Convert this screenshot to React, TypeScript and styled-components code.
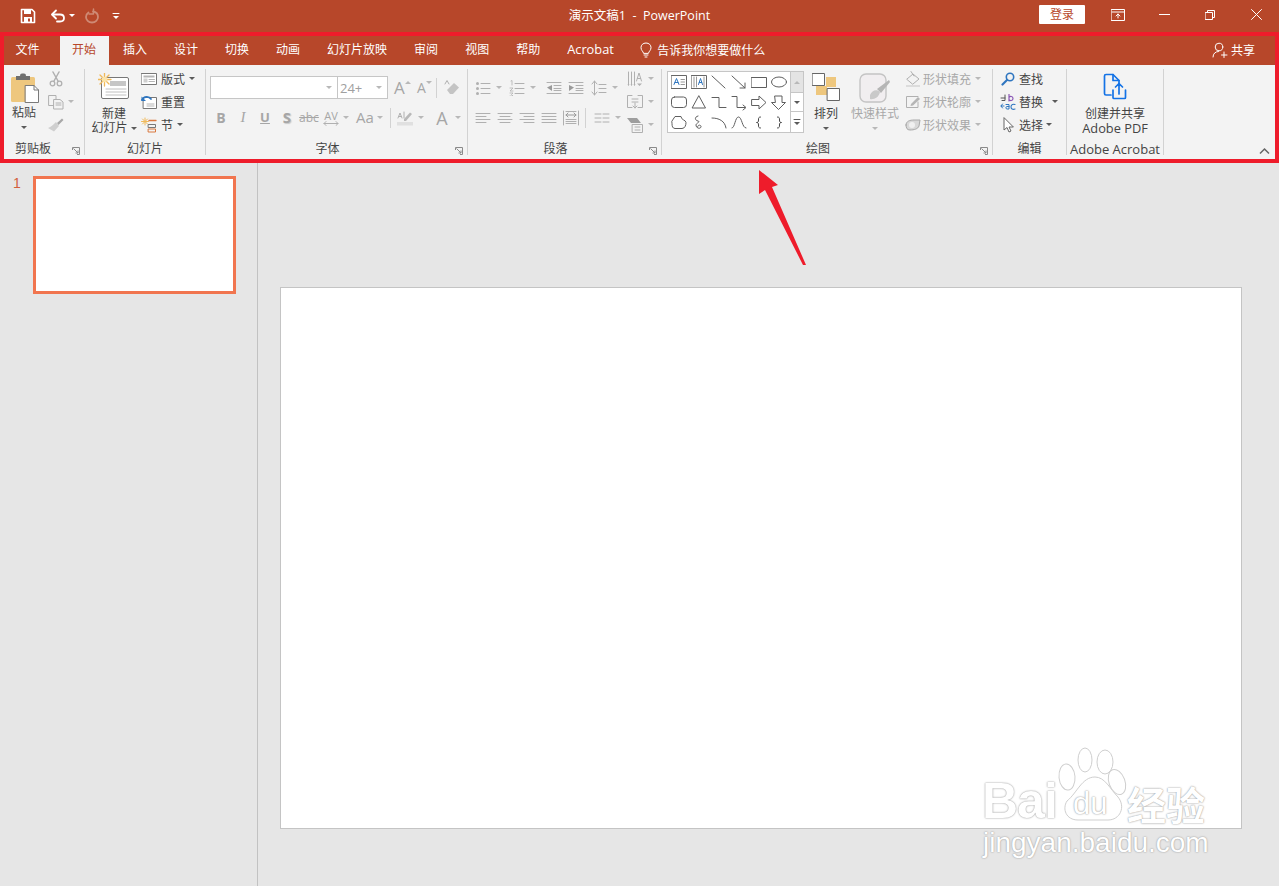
import React from "react";
import styled, { createGlobalStyle } from "styled-components";

const BRAND = "#b7472a";
const OFF = "#b0b0b0";
const INK = "#5f5f5f";
const CJK = `"Open Sans", "Noto Sans CJK SC", sans-serif`;

const Global = createGlobalStyle`
    html, body { margin: 0; padding: 0; background: #e6e6e6; }
    body { font-family: ${CJK}; font-size: 12px; color: #444; overflow: hidden; }
    * { box-sizing: border-box; }
`
const Page = styled.div`
    position: relative;
    width: 1279px;
    height: 886px;
    overflow: hidden;
    display: flex;
    flex-direction: column;
`
/* ---------- title bar ---------- */
const TitleBar = styled.div`
    height: 33px;
    background: ${BRAND};
    color: #fff;
    display: grid;
    grid-template-columns: 1fr auto 1fr;
    align-items: center;
`
const Quick = styled.div`
    display: flex;
    align-items: center;
    padding: 0 0 2px 20px;
`
const QuickBtn = styled.div<{ $w: number }>`
    width: ${p => p.$w}px;
    display: flex;
    align-items: center;
`
const DocTitle = styled.div`
    font-size: 12.5px;
    white-space: pre;
    padding-bottom: 4px;
`
const WinButtons = styled.div`
    display: flex;
    align-items: center;
    justify-content: flex-end;
    padding-bottom: 4px;
`
const Login = styled.div`
    width: 46px;
    height: 19px;
    background: #fff;
    color: ${BRAND};
    border-radius: 1px;
    text-align: center;
    line-height: 19px;
    font-size: 12px;
    margin-right: 10px;
`
const WinBtn = styled.div`
    width: 46px;
    display: flex;
    justify-content: center;
`
/* ---------- tabs ---------- */
const TabRow = styled.div`
    height: 32px;
    background: ${BRAND};
    display: flex;
    align-items: flex-end;
    padding: 0 24px 0 2px;
    color: #fff;
`
const Tab = styled.div<{ $active?: boolean; $file?: boolean; $latin?: boolean }>`
    height: 29px;
    line-height: 27px;
    padding: 0 12.5px;
    margin: 0 ${p => (p.$file ? 6.5 : 1)}px 0 1px;
    background: ${p => (p.$active ? "#f3f3f3" : "transparent")};
    color: ${p => (p.$active ? BRAND : "#fff")};
    font-size: ${p => (p.$latin ? 12.8 : 12)}px;
    white-space: nowrap;
`
const TellMe = styled.div`
    display: flex;
    align-items: center;
    gap: 4px;
    height: 27px;
    margin: 0 0 2px 12px;
`
const Share = styled.div`
    margin: 0 0 2px auto;
    height: 27px;
    display: flex;
    align-items: center;
    gap: 3px;
`
/* ---------- ribbon ---------- */
const Ribbon = styled.div`
    position: relative;
    height: 94px;
    background: #f3f3f3;
    display: flex;
    padding: 4px 0;
`
const GroupBox = styled.div<{ $w: number }>`
    position: relative;
    width: ${p => p.$w}px;
    flex: none;
    display: flex;
    flex-direction: column;
    border-right: 1px solid #d2d2d2;
`
const GroupBody = styled.div`
    flex: 1;
    display: flex;
    min-height: 0;
`
const GroupLabel = styled.div<{ $launcher?: boolean; $latin?: boolean }>`
    height: 14px;
    line-height: 14px;
    margin-top: 1px;
    margin-bottom: -1px;
    padding-right: ${p => (p.$launcher ? 18 : 0)}px;
    text-align: center;
    white-space: nowrap;
    color: #444;
    font-size: ${p => (p.$latin ? 13 : 12)}px;
`
const Launcher = styled.svg`
    position: absolute;
    right: 4px;
    bottom: 0;
    width: 8px;
    height: 8px;
`
const Collapse = styled.svg`
    position: absolute;
    left: 1259px;
    top: 82px;
    width: 11px;
    height: 8px;
`
const Large = styled.div<{ $w: number; $off?: boolean }>`
    width: ${p => p.$w}px;
    flex: none;
    display: flex;
    flex-direction: column;
    align-items: center;
    color: ${p => (p.$off ? "#a8a8a8" : "#444")};
    padding-top: 4px;
`
const LargeIcon = styled.div<{ $h?: number }>`
    height: ${p => p.$h ?? 34}px;
`
const LargeText = styled.div<{ $latin?: boolean }>`
    line-height: 14px;
    white-space: nowrap;
    display: flex;
    align-items: center;
    font-size: ${p => (p.$latin ? 12.8 : 12)}px;
`
const Stack = styled.div<{ $pl?: number }>`
    display: flex;
    flex-direction: column;
    gap: 2px;
    padding-left: ${p => p.$pl ?? 0}px;
    margin-top: -1px;
`
const SmallBtn = styled.div<{ $off?: boolean }>`
    height: 21px;
    display: flex;
    align-items: center;
    gap: 4px;
    white-space: nowrap;
    color: ${p => (p.$off ? "#a8a8a8" : "#444")};
`
const Slot = styled.div<{ $w?: number }>`
    width: ${p => p.$w ?? 16}px;
    flex: none;
    display: flex;
    align-items: center;
    justify-content: center;
`
const Caret = styled.i<{ $ml?: number; $off?: boolean }>`
    display: inline-block;
    width: 0;
    height: 0;
    margin-left: ${p => p.$ml ?? 0}px;
    border: 3px solid transparent;
    border-bottom: 0;
    border-top-color: ${p => (p.$off ? "#b8b8b8" : "#5a5a5a")};
`
const CaretRow = styled.div`
    height: 12px;
    display: flex;
    align-items: center;
    margin-top: 1px;
`
const Rows = styled.div<{ $pl: number; $w: number }>`
    width: ${p => p.$w}px;
    flex: none;
    padding: 7px 0 0 ${p => p.$pl}px;
    display: flex;
    flex-direction: column;
    gap: 8px;
`
const Row = styled.div`
    display: flex;
    align-items: center;
    height: 23px;
`
const Combo = styled.div<{ $w: number; $join?: boolean }>`
    width: ${p => p.$w}px;
    height: 23px;
    background: #fff;
    border: 1px solid #c6c6c6;
    margin-left: ${p => (p.$join ? -1 : 0)}px;
    display: flex;
    align-items: center;
    padding: 0 5px 0 2px;
    color: #a0a0a0;
    font-size: 13px;
    justify-content: space-between;
`
const IconBtn = styled.div<{ $w?: number }>`
    width: ${p => p.$w ?? 22}px;
    flex: none;
    height: 22px;
    display: flex;
    align-items: center;
`
const Glyph = styled.span<{ $size?: number; $bold?: boolean; $italic?: boolean; $under?: boolean; $strike?: boolean; $shadow?: boolean }>`
    font-family: "Open Sans", sans-serif;
    font-size: ${p => p.$size ?? 12}px;
    font-weight: ${p => (p.$bold ? 700 : 400)};
    font-style: ${p => (p.$italic ? "italic" : "normal")};
    text-decoration: ${p => (p.$under ? "underline" : p.$strike ? "line-through" : "none")};
    text-shadow: ${p => (p.$shadow ? "1px 1px 1px #c8c8c8" : "none")};
    color: #a6a6a6;
    line-height: 1;
`
const AVStack = styled.span`
    display: flex;
    flex-direction: column;
    align-items: center;
    line-height: 10px;
`
const VSep = styled.div`
    width: 1px;
    height: 20px;
    background: #d2d2d2;
    flex: none;
`
/* ---------- shape gallery ---------- */
const Gallery = styled.div`
    margin: 2px 0 0 5px;
    width: 137px;
    height: 62px;
    flex: none;
    display: flex;
    border: 1px solid #c6c6c6;
    background: #fff;
`
const GalleryGrid = styled.div`
    width: 122px;
    display: grid;
    grid-template-columns: repeat(6, 20px);
    grid-auto-rows: 20px;
    padding: 1px 0 0 1px;
`
const Cell = styled.div`
    display: flex;
    align-items: center;
    justify-content: center;
`
const Spin = styled.div`
    flex: 1;
    display: flex;
    flex-direction: column;
    border-left: 1px solid #c6c6c6;
`
const SpinPart = styled.div<{ $top?: boolean; $h: number }>`
    height: ${p => p.$h}px;
    background: ${p => (p.$top ? "#e4e4e4" : "#fff")};
    border-bottom: 1px solid #c6c6c6;
    display: flex;
    align-items: center;
    justify-content: center;
    &:last-child { border-bottom: 0; }
`
/* ---------- main area ---------- */
const Main = styled.div`
    flex: 1;
    display: flex;
    background: #e6e6e6;
    min-height: 0;
`
const Sidebar = styled.div`
    width: 258px;
    flex: none;
    border-right: 1px solid #c2c2c2;
    padding: 17px 0 0 13px;
    display: flex;
    align-items: flex-start;
    gap: 14px;
`
const ThumbNo = styled.div`
    color: #d2603c;
    font-family: "Liberation Sans", sans-serif;
    font-size: 14px;
    line-height: 15px;
    width: 6px;
`
const Thumb = styled.div`
    width: 203px;
    height: 118px;
    background: #fff;
    border: 3px solid #f1754f;
`
const Canvas = styled.div`
    flex: 1;
    padding: 128px 0 0 22px;
`
const Slide = styled.div`
    width: 962px;
    height: 542px;
    background: #fff;
    border: 1px solid #c4c4c4;
`
/* ---------- things lying over the screenshot ---------- */
const RedBox = styled.div`
    position: absolute;
    left: 0;
    top: 32px;
    width: 1279px;
    height: 131px;
    border: 4px solid #ee1c2b;
    pointer-events: none;
`
const Arrow = styled.svg`
    position: absolute;
    left: 750px;
    top: 165px;
    width: 65px;
    height: 105px;
`
const Mark = styled.div`
    position: absolute;
    left: 975px;
    top: 745px;
    width: 245px;
    height: 120px;
    color: #fff;
    text-shadow: 0 0 2px #9c9c9c, 0 0 1px #b8b8b8;
    font-family: "Liberation Sans", sans-serif;
    line-height: 1;
`
const MarkBai = styled.span`
    position: absolute;
    left: 7px;
    top: 31px;
    font-size: 50px;
    font-weight: 700;
    letter-spacing: -1px;
`
const MarkPaw = styled.svg`
    position: absolute;
    left: 75px;
    top: 0;
    width: 90px;
    height: 80px;
`
const MarkDu = styled.span`
    position: absolute;
    left: 98px;
    top: 43px;
    font-size: 31px;
`
const MarkCn = styled.span`
    position: absolute;
    left: 152px;
    top: 39px;
    font-size: 39px;
    font-family: "Noto Sans CJK SC", sans-serif;
    font-weight: 700;
`
const MarkUrl = styled.span`
    position: absolute;
    left: 8px;
    top: 84px;
    font-size: 28px;
    white-space: nowrap;
`

const Ico = ({ w = 16, h = 16, children }: { w?: number; h?: number; children: React.ReactNode }) => (
    <svg width={w} height={h} viewBox={`0 0 ${w} ${h}`} fill="none" strokeLinecap="round" strokeLinejoin="round" style={{ display: "block" }}>
        {children}
    </svg>
);

const Lines = ({ ys, x1, x2 }: { ys: number[]; x1: number; x2: number }) => (
    <>{ys.map(y => <path key={y} d={`M${x1} ${y}.5H${x2}`} stroke={OFF} />)}</>
);

function Group({ w, label, launcher, latin, children }: { w: number; label: string; launcher?: boolean; latin?: boolean; children: React.ReactNode }) {
    return (
        <GroupBox $w={w}>
            <GroupBody>{children}</GroupBody>
            <GroupLabel $launcher={launcher} $latin={latin}>{label}</GroupLabel>
            {launcher && (
                <Launcher viewBox="0 0 8 8" fill="none" stroke="#8a8a8a">
                    <path d="M.5 3V.5H7.5V7.5H5" />
                    <path d="M1.5 1.5L6 6M6 3.5V6H3.5" />
                </Launcher>
            )}
        </GroupBox>
    );
}

const shapes: React.ReactNode[] = [
    <><rect x=".5" y=".5" width="15" height="13" stroke="#666" /><path d="M3 9.5L5.5 3.5L8 9.5M4 7.5H7" stroke="#2f76c0" /><path d="M10 4.5H13.5M10 7H13.5M10 9.5H13.5" stroke="#999" /></>,
    <><rect x=".5" y=".5" width="15" height="13" stroke="#666" /><path d="M3 2V12M5.5 2V12M13 2V12" stroke="#999" /><path d="M7.5 9.5L9.5 3.5L11.5 9.5M8.3 7.5H10.7" stroke="#2f76c0" /></>,
    <path d="M1 1L14 13" stroke={INK} />,
    <><path d="M1 1L14 13" stroke={INK} /><path d="M14 8V13H9" stroke={INK} /></>,
    <rect x=".5" y="2.5" width="15" height="10" stroke={INK} />,
    <ellipse cx="8" cy="7" rx="7.5" ry="5" stroke={INK} />,
    <rect x=".5" y="2" width="15" height="10.5" rx="3" stroke={INK} />,
    <path d="M8 1L14.5 13H1.5Z" stroke={INK} />,
    <path d="M1 2.5H8V12.5H15" stroke={INK} />,
    <><path d="M1 1.5H6V12.5H14" stroke={INK} /><path d="M12 10L15 12.5L12 15" stroke={INK} /></>,
    <path d="M1 4.5H8V1L15 7.5L8 14V10.5H1Z" stroke={INK} />,
    <path d="M4 1H11V7.5H14.5L7.5 14.5L.5 7.5H4Z" stroke={INK} />,
    <path d="M1 6L4 1.5H10C10 5 15 5 15 7.5C15 10 14 13.5 11 13.5H4C1.5 13.5 1 11 1 9Z" stroke={INK} />,
    <path d="M7 1C3 2 4 5.5 7 6C10 7 5 8 5 10C5 13 9 14.5 10 12C10.5 10 7 9 6.5 12" stroke={INK} />,
    <path d="M1 3C8 3 14 6 15 13" stroke={INK} />,
    <path d="M1 13C4 13 4 2 7.5 2C11 2 11 13 15 13" stroke={INK} />,
    <path d="M9.5 2C7.5 2 7.5 3 7.5 5C7.5 7 7 7.5 5.5 7.5C7 7.5 7.5 8 7.5 10C7.5 12 7.5 13 9.5 13" stroke="#444" />,
    <path d="M6.5 2C8.5 2 8.5 3 8.5 5C8.5 7 9 7.5 10.5 7.5C9 7.5 8.5 8 8.5 10C8.5 12 8.5 13 6.5 13" stroke="#444" />,
];

const Blue = "#1473e6";

export default function App() {
    return (
        <Page>
            <Global />
            <TitleBar>
                <Quick>
                    <QuickBtn $w={30}>
                        <Ico>
                            <path d="M1.5 1.5H12L14.5 4V14.5H1.5Z" stroke="#fff" strokeWidth="1.6" />
                            <rect x="4" y="2" width="7" height="4" fill="#fff" />
                            <rect x="4" y="9" width="8" height="5" fill="#fff" />
                            <rect x="8" y="10.5" width="2" height="3" fill={BRAND} />
                        </Ico>
                    </QuickBtn>
                    <QuickBtn $w={34}>
                        <Ico>
                            <path d="M2.5 6.5H10C13 6.5 14 8.5 14 10C14 12 12.5 13.5 10 13.5H7" stroke="#fff" strokeWidth="1.8" />
                            <path d="M6 2.5L2 6.5L6 10.5" stroke="#fff" strokeWidth="1.8" />
                        </Ico>
                        <Caret $ml={3} style={{ borderTopColor: "#fff" }} />
                    </QuickBtn>
                    <QuickBtn $w={28}>
                        <Ico>
                            <path d="M9 3.5C12 4 14 6 14 9C14 12 11.5 14.5 8 14.5C4.5 14.5 2 12 2 9C2 7 3 5.5 4.5 4.5" stroke="#cf8a75" strokeWidth="1.8" />
                            <path d="M9.5 1V6H5" stroke="#cf8a75" strokeWidth="1.5" />
                        </Ico>
                    </QuickBtn>
                    <QuickBtn $w={20}>
                        <Ico w={8} h={10}>
                            <path d="M1 2.5H7" stroke="#fff" />
                            <path d="M1 5H7L4 8Z" fill="#fff" />
                        </Ico>
                    </QuickBtn>
                </Quick>
                <DocTitle>演示文稿1  -  PowerPoint</DocTitle>
                <WinButtons>
                    <Login>登录</Login>
                    <WinBtn>
                        <Ico w={14} h={12}>
                            <rect x=".5" y=".5" width="13" height="11" stroke="#fff" />
                            <path d="M1 3H13" stroke="#fff" />
                            <path d="M5 7L7 5L9 7M7 5V9" stroke="#fff" />
                        </Ico>
                    </WinBtn>
                    <WinBtn>
                        <Ico w={11} h={11}><path d="M0 5.5H11" stroke="#fff" /></Ico>
                    </WinBtn>
                    <WinBtn>
                        <Ico w={10} h={10}>
                            <rect x=".5" y="2.5" width="7" height="7" stroke="#fff" />
                            <path d="M2.5 2V.5H9.5V7.5H8" stroke="#fff" />
                        </Ico>
                    </WinBtn>
                    <WinBtn>
                        <Ico w={11} h={11}><path d="M.5 .5L10.5 10.5M10.5 .5L.5 10.5" stroke="#fff" /></Ico>
                    </WinBtn>
                </WinButtons>
            </TitleBar>

            <TabRow>
                <Tab $file>文件</Tab>
                <Tab $active>开始</Tab>
                {["插入", "设计", "切换", "动画", "幻灯片放映", "审阅", "视图", "帮助"].map(t => <Tab key={t}>{t}</Tab>)}
                <Tab $latin>Acrobat</Tab>
                <TellMe>
                    <Ico w={14} h={16}>
                        <path d="M4.5 11C4 9 2 8.5 2 5.5C2 3 4 1 7 1C10 1 12 3 12 5.5C12 8.5 10 9 9.5 11Z" stroke="#fff" />
                        <path d="M5 13H9M6 15H8" stroke="#fff" />
                    </Ico>
                    告诉我你想要做什么
                </TellMe>
                <Share>
                    <Ico>
                        <circle cx="7" cy="5" r="3.8" stroke="#fff" />
                        <path d="M1 15C1 11.5 3.5 9.5 6.5 9.5" stroke="#fff" />
                        <path d="M12 10V15.5M9.5 13H15" stroke="#fff" />
                    </Ico>
                    共享
                </Share>
            </TabRow>

            <Ribbon>
                <Group w={85} label="剪贴板" launcher>
                    <GroupBody style={{ paddingLeft: 5 }}>
                        <Large $w={38}>
                            <LargeIcon $h={33}>
                                <Ico w={29} h={30}>
                                    <rect x="1" y="4" width="24" height="25" rx="1.5" fill="#eec77e" />
                                    <rect x="6" y="3" width="14" height="4" fill="#6f6f6f" />
                                    <rect x="10" y="0.5" width="6" height="4" rx="2" fill="#6f6f6f" />
                                    <path d="M15.5 12.5H24L28.5 17V29.5H15.5Z" fill="#fff" stroke="#7a7a7a" />
                                    <path d="M24 12.5V17H28.5" stroke="#7a7a7a" />
                                </Ico>
                            </LargeIcon>
                            <LargeText>粘贴</LargeText>
                            <CaretRow><Caret /></CaretRow>
                        </Large>
                        <Stack $pl={5}>
                            <SmallBtn $off>
                                <Slot>
                                    <Ico>
                                        <path d="M5 1L10 10M11 1L6 10" stroke={OFF} strokeWidth="1.5" />
                                        <circle cx="4.5" cy="12.5" r="2.3" stroke={OFF} strokeWidth="1.3" />
                                        <circle cx="11.5" cy="12.5" r="2.3" stroke={OFF} strokeWidth="1.3" />
                                    </Ico>
                                </Slot>
                            </SmallBtn>
                            <SmallBtn $off>
                                <Slot>
                                    <Ico>
                                        <path d="M1 1.5H8V11.5H1Z" stroke={OFF} />
                                        <path d="M6 5.5H12L15 8V15H6Z" fill="#f3f3f3" stroke={OFF} />
                                        <path d="M8 9H13M8 11H13" stroke={OFF} />
                                    </Ico>
                                </Slot>
                                <Caret $off />
                            </SmallBtn>
                            <SmallBtn $off>
                                <Slot>
                                    <Ico>
                                        <path d="M9 6L14 1.5L15.5 3L10.5 8Z" fill="#a8a8a8" />
                                        <path d="M8 5L11 9L6 14.5L0 11C3 10 5 8 8 5Z" fill="#cfcfcf" />
                                    </Ico>
                                </Slot>
                            </SmallBtn>
                        </Stack>
                    </GroupBody>
                </Group>

                <Group w={121} label="幻灯片">
                    <GroupBody style={{ paddingLeft: 5 }}>
                        <Large $w={48}>
                            <LargeIcon>
                                <Ico w={32} h={27}>
                                    <rect x="3.5" y="4.5" width="27" height="21" rx="1.5" fill="#fff" stroke="#777" />
                                    <rect x="12" y="8" width="16" height="5" fill="#c6c6c6" />
                                    <path d="M8 16H28M8 19H28M8 22H28" stroke="#c0c0c0" />
                                    <path d="M6.5 0V13M0 6.5H13M2 2L11 11M11 2L2 11" stroke="#f0b959" strokeWidth="1.3" />
                                    <circle cx="6.5" cy="6.5" r="2.8" fill="#fbe3a8" />
                                </Ico>
                            </LargeIcon>
                            <LargeText>新建</LargeText>
                            <LargeText>幻灯片<Caret $ml={3} /></LargeText>
                        </Large>
                        <Stack $pl={3}>
                            <SmallBtn>
                                <Slot>
                                    <Ico>
                                        <rect x=".5" y="2.5" width="15" height="11" fill="#fff" stroke="#777" />
                                        <rect x="2.5" y="4.5" width="11" height="2" fill="#b5b5b5" />
                                        <rect x="2.5" y="7.5" width="4" height="4" fill="#cfcfcf" />
                                        <path d="M8 8.5H13.5M8 10.5H13.5" stroke="#b5b5b5" />
                                    </Ico>
                                </Slot>
                                版式<Caret />
                            </SmallBtn>
                            <SmallBtn>
                                <Slot>
                                    <Ico>
                                        <rect x="2.5" y="3.5" width="13" height="11" fill="#fff" stroke="#777" />
                                        <path d="M6 10H13M6 12H13" stroke="#b5b5b5" />
                                        <path d="M1 6C3 2 8 2 10 5" stroke="#2f76c0" strokeWidth="1.8" />
                                        <path d="M.5 2.5V7H5" fill="#2f76c0" />
                                    </Ico>
                                </Slot>
                                重置
                            </SmallBtn>
                            <SmallBtn>
                                <Slot>
                                    <Ico>
                                        <path d="M4 1V8M.5 4.5H7.5M1.5 2L6.5 7M6.5 2L1.5 7" stroke="#f0b959" />
                                        <path d="M8 3.5H15" stroke="#d9783f" strokeWidth="1.3" />
                                        <rect x="7.5" y="7.5" width="7" height="3" stroke="#777" />
                                        <rect x="7.5" y="12" width="7" height="3" stroke="#d9783f" />
                                    </Ico>
                                </Slot>
                                节<Caret />
                            </SmallBtn>
                        </Stack>
                    </GroupBody>
                </Group>

                <Group w={262} label="字体" launcher>
                    <Rows $pl={4} $w={261}>
                        <Row>
                            <Combo $w={128}><span /><Caret $off /></Combo>
                            <Combo $w={51} $join>24+<Caret $off /></Combo>
                            <IconBtn $w={23} style={{ paddingLeft: 6 }}>
                                <Glyph $size={17}>A</Glyph><Caret $off style={{ transform: "rotate(180deg) translateY(5px)" }} />
                            </IconBtn>
                            <IconBtn $w={22} style={{ paddingLeft: 6 }}>
                                <Glyph $size={14}>A</Glyph><Caret $off style={{ transform: "translateY(-5px)" }} />
                            </IconBtn>
                            <VSep style={{ marginLeft: 3 }} />
                            <IconBtn $w={30} style={{ paddingLeft: 7 }}>
                                <Ico>
                                    <path d="M1 4L3 0.5L5 4" stroke={OFF} />
                                    <path d="M3 10L10 3L15 7.5L9 14H6Z" fill="#c4c4c4" />
                                </Ico>
                            </IconBtn>
                        </Row>
                        <Row style={{ marginTop: -1 }}>
                            {[
                                <Glyph $bold $size={14}>B</Glyph>,
                                <Glyph $italic $size={15} style={{ fontFamily: "Liberation Serif, serif" }}>I</Glyph>,
                                <Glyph $under $bold $size={13}>U</Glyph>,
                                <Glyph $bold $shadow $size={15}>S</Glyph>,
                                <Glyph $strike $size={12}>abc</Glyph>,
                            ].map((g, i) => <IconBtn key={i}><Slot $w={22}>{g}</Slot></IconBtn>)}
                            <IconBtn $w={34}>
                                <Slot $w={22}>
                                    <AVStack>
                                        <Glyph $size={11}>AV</Glyph>
                                        <Ico w={16} h={5}><path d="M1 2.5H15M3 .5L1 2.5L3 4.5M13 .5L15 2.5L13 4.5" stroke={OFF} /></Ico>
                                    </AVStack>
                                </Slot>
                                <Caret $off $ml={1} />
                            </IconBtn>
                            <IconBtn $w={33}>
                                <Slot $w={22}><Glyph $size={15}>Aa</Glyph></Slot>
                                <Caret $off $ml={1} />
                            </IconBtn>
                            <VSep style={{ marginLeft: 3 }} />
                            <IconBtn $w={37} style={{ marginLeft: 3 }}>
                                <Slot $w={22}>
                                    <Ico w={18} h={16}>
                                        <path d="M2 8L4 3L6 8M3 6.5H5M8 2V8" stroke={OFF} />
                                        <path d="M8 9L14 2.5L16 4L10 11H8Z" fill="#b8b8b8" />
                                        <rect x="1" y="12" width="16" height="3.5" fill="#e0e0e0" />
                                    </Ico>
                                </Slot>
                                <Caret $off $ml={2} />
                            </IconBtn>
                            <IconBtn $w={36}>
                                <Slot $w={22}><Glyph $size={18}>A</Glyph></Slot>
                                <Caret $off $ml={2} />
                            </IconBtn>
                        </Row>
                    </Rows>
                </Group>

                <Group w={194} label="段落" launcher>
                    <GroupBody>
                        <Rows $pl={4} $w={156}>
                            <Row>
                                <IconBtn $w={34}>
                                    <Slot $w={22}>
                                        <Ico>
                                            <Lines ys={[3, 8, 13]} x1={6} x2={15} />
                                            <circle cx="2.5" cy="3.5" r="1.5" fill={OFF} />
                                            <circle cx="2.5" cy="8.5" r="1.5" fill={OFF} />
                                            <circle cx="2.5" cy="13.5" r="1.5" fill={OFF} />
                                        </Ico>
                                    </Slot>
                                    <Caret $off $ml={2} />
                                </IconBtn>
                                <IconBtn $w={37}>
                                    <Slot $w={22}>
                                        <Ico>
                                            <Lines ys={[3, 8, 13]} x1={6} x2={15} />
                                            <path d="M2 1L3 .5V5M1 8H4L1 11H4M1 13H4L2.5 14.5L4 16H1" stroke={OFF} strokeWidth=".8" />
                                        </Ico>
                                    </Slot>
                                    <Caret $off $ml={2} />
                                </IconBtn>
                                <IconBtn>
                                    <Slot $w={22}>
                                        <Ico>
                                            <Lines ys={[2, 13]} x1={1} x2={15} />
                                            <Lines ys={[5, 8, 10]} x1={8} x2={15} />
                                            <path d="M6 5V11L1 7.5Z" fill="#9a9a9a" />
                                        </Ico>
                                    </Slot>
                                </IconBtn>
                                <IconBtn>
                                    <Slot $w={22}>
                                        <Ico>
                                            <Lines ys={[2, 13]} x1={1} x2={15} />
                                            <Lines ys={[5, 8, 10]} x1={8} x2={15} />
                                            <path d="M1 5V11L6 7.5Z" fill="#9a9a9a" />
                                        </Ico>
                                    </Slot>
                                </IconBtn>
                                <IconBtn $w={33} style={{ marginLeft: 1 }}>
                                    <Slot $w={22}>
                                        <Ico>
                                            <path d="M3.5 1V15M1 4L3.5 1L6 4M1 12L3.5 15L6 12" stroke={OFF} />
                                            <Lines ys={[4, 8, 12]} x1={8} x2={15} />
                                        </Ico>
                                    </Slot>
                                    <Caret $off $ml={2} />
                                </IconBtn>
                            </Row>
                            <Row style={{ marginTop: -1 }}>
                                <IconBtn>
                                    <Slot $w={22}><Ico><Lines ys={[3, 9]} x1={1} x2={15} /><Lines ys={[6, 12]} x1={1} x2={11} /></Ico></Slot>
                                </IconBtn>
                                <IconBtn>
                                    <Slot $w={22}><Ico><Lines ys={[3, 9]} x1={1} x2={15} /><Lines ys={[6, 12]} x1={3} x2={13} /></Ico></Slot>
                                </IconBtn>
                                <IconBtn>
                                    <Slot $w={22}><Ico><Lines ys={[3, 9]} x1={1} x2={15} /><Lines ys={[6, 12]} x1={5} x2={15} /></Ico></Slot>
                                </IconBtn>
                                <IconBtn>
                                    <Slot $w={22}><Ico><Lines ys={[3, 6, 9, 12]} x1={1} x2={15} /></Ico></Slot>
                                </IconBtn>
                                <IconBtn>
                                    <Slot $w={22}>
                                        <Ico>
                                            <path d="M.5 1V15M15.5 1V15" stroke={OFF} />
                                            <Lines ys={[1, 9, 11, 13]} x1={3} x2={13} />
                                            <path d="M3 5H13M5 3L3 5L5 7M11 3L13 5L11 7" stroke="#9a9a9a" />
                                        </Ico>
                                    </Slot>
                                </IconBtn>
                                <VSep style={{ marginLeft: 3 }} />
                                <IconBtn $w={33} style={{ marginLeft: 5 }}>
                                    <Slot $w={22}>
                                        <Ico><path d="M1 4H7M1 8H7M1 12H7M9 4H15M9 8H15M9 12H15" stroke={OFF} /></Ico>
                                    </Slot>
                                    <Caret $off $ml={2} />
                                </IconBtn>
                            </Row>
                        </Rows>
                        <Stack>
                            <SmallBtn style={{ gap: 2 }}>
                                <Slot $w={22}>
                                    <Ico>
                                        <path d="M1.5 1V14M4.5 1V14M7.5 1V14" stroke={OFF} />
                                        <path d="M1.5 15L.5 13H2.5ZM4.5 15L3.5 13H5.5ZM7.5 15L6.5 13H8.5ZM12.5 15L10 12.5H15Z" fill={OFF} />
                                        <path d="M9.5 10L12 2L14.5 10M10.5 7.5H13.5" stroke={OFF} />
                                    </Ico>
                                </Slot>
                                <Caret $off />
                            </SmallBtn>
                            <SmallBtn style={{ gap: 2 }}>
                                <Slot $w={22}>
                                    <Ico>
                                        <path d="M5 1.5H.5V13.5H5M11 1.5H15.5V13.5H11" stroke={OFF} />
                                        <path d="M5 5H11M5 8H11M8 9V14M6 12L8 14L10 12" stroke={OFF} />
                                    </Ico>
                                </Slot>
                                <Caret $off />
                            </SmallBtn>
                            <SmallBtn style={{ gap: 2 }}>
                                <Slot $w={22}>
                                    <Ico>
                                        <path d="M0 1H10L14 6H4Z" fill="#9e9e9e" />
                                        <rect x="5.5" y="7.5" width="10" height="8" fill="#f3f3f3" stroke={OFF} />
                                        <path d="M8 10H13M8 13H13" stroke={OFF} />
                                    </Ico>
                                </Slot>
                                <Caret $off />
                            </SmallBtn>
                        </Stack>
                    </GroupBody>
                </Group>

                <Group w={331} label="绘图" launcher>
                    <GroupBody>
                        <Gallery>
                            <GalleryGrid>
                                {shapes.map((s, i) => <Cell key={i}><Ico>{s}</Ico></Cell>)}
                            </GalleryGrid>
                            <Spin>
                                <SpinPart $top $h={21}><Caret $off style={{ transform: "rotate(180deg)" }} /></SpinPart>
                                <SpinPart $h={19}><Caret /></SpinPart>
                                <SpinPart $h={20}>
                                    <Ico w={8} h={10}>
                                        <path d="M1 2.5H7" stroke="#5a5a5a" />
                                        <path d="M1 5H7L4 8Z" fill="#5a5a5a" />
                                    </Ico>
                                </SpinPart>
                            </Spin>
                        </Gallery>
                        <Large $w={44}>
                            <LargeIcon>
                                <Ico w={28} h={29}>
                                    <rect x="14" y="4" width="10" height="10" fill="#eec77e" />
                                    <rect x="4" y="13" width="11" height="9" fill="#eec77e" />
                                    <rect x=".5" y=".5" width="12" height="12" fill="#fff" stroke="#666" />
                                    <rect x="15.5" y="15.5" width="12" height="12" fill="#fff" stroke="#666" />
                                </Ico>
                            </LargeIcon>
                            <LargeText>排列</LargeText>
                            <CaretRow><Caret /></CaretRow>
                        </Large>
                        <Large $w={50} $off style={{ marginLeft: 2 }}>
                            <LargeIcon>
                                <Ico w={32} h={33}>
                                    <rect x="1" y="1" width="26" height="28" rx="6" fill="#f1eef0" stroke="#c4c4c4" strokeWidth="1.4" />
                                    <path d="M18 16L30 7L31 9L22 20Z" fill="#b5b5b5" />
                                    <path d="M11 22C13 17 18 16 21 19C20 24 15 27 11 26Z" fill="#c9c9c9" />
                                </Ico>
                            </LargeIcon>
                            <LargeText>快速样式</LargeText>
                            <CaretRow><Caret $off /></CaretRow>
                        </Large>
                        <Stack $pl={5}>
                            <SmallBtn $off style={{ gap: 2 }}>
                                <Slot>
                                    <Ico>
                                        <path d="M2 8L8 3L14 8L8 13Z" stroke={OFF} />
                                        <path d="M6 0.5L9 5" stroke={OFF} />
                                        <rect x="1" y="14" width="14" height="2" fill="#dcdcdc" />
                                    </Ico>
                                </Slot>
                                形状填充<Caret $off $ml={2} />
                            </SmallBtn>
                            <SmallBtn $off style={{ gap: 2 }}>
                                <Slot>
                                    <Ico>
                                        <path d="M13 2.5H1.5V13.5H13V8" stroke={OFF} />
                                        <path d="M6 10L13 3L15 5L8 11.5L5.5 12Z" fill="#b5b5b5" />
                                    </Ico>
                                </Slot>
                                形状轮廓<Caret $off $ml={2} />
                            </SmallBtn>
                            <SmallBtn $off style={{ gap: 2 }}>
                                <Slot>
                                    <Ico>
                                        <path d="M1 8C1 4 5 3 9 3H15L14 9C13 12 9 13 5 13C2 13 1 11 1 8Z" fill="#d8d8d8" stroke="#a8a8a8" />
                                        <circle cx="7" cy="8" r="3" fill="#f0f0f0" />
                                    </Ico>
                                </Slot>
                                形状效果<Caret $off $ml={2} />
                            </SmallBtn>
                        </Stack>
                    </GroupBody>
                </Group>

                <Group w={74} label="编辑">
                    <GroupBody>
                        <Stack $pl={7}>
                            <SmallBtn style={{ gap: 3 }}>
                                <Slot>
                                    <Ico w={14} h={14}>
                                        <circle cx="9" cy="5" r="3.7" stroke="#2f76c0" strokeWidth="1.6" />
                                        <path d="M1.5 12.5L6 8" stroke="#2f76c0" strokeWidth="2.2" />
                                    </Ico>
                                </Slot>
                                查找
                            </SmallBtn>
                            <SmallBtn style={{ gap: 3 }}>
                                <Slot>
                                    <Ico>
                                        <path d="M1 4L5 4M2 6.5H5V1" stroke="#555" />
                                        <path d="M9 0V7M9 3.5C10 2 13 2 13 4.5C13 7 10 7 9 5.5" stroke="#8a57b5" strokeWidth="1.2" />
                                        <path d="M1 12H4M2.5 10L1 12L2.5 14" stroke="#2f76c0" />
                                        <path d="M6 10.5H9V15H7C5.5 15 5.5 12.5 7 12.5H9" stroke="#2f76c0" />
                                        <path d="M15 10.5C12 9.5 11 11.5 11 13C11 14.5 12.5 16 15 15" stroke="#2f76c0" strokeWidth="1.1" />
                                    </Ico>
                                </Slot>
                                替换<Caret $ml={6} />
                            </SmallBtn>
                            <SmallBtn style={{ gap: 3 }}>
                                <Slot>
                                    <Ico>
                                        <path d="M4 1V13L7 10.5L9 15L11 14L9 10H13Z" fill="#fff" stroke="#666" />
                                    </Ico>
                                </Slot>
                                选择<Caret />
                            </SmallBtn>
                        </Stack>
                    </GroupBody>
                </Group>

                <Group w={97} label="Adobe Acrobat" latin>
                    <Large $w={96}>
                        <LargeIcon>
                            <Ico w={24} h={27}>
                                <path d="M8 22H3C2 22 1.5 21.5 1.5 20.5V3C1.5 2 2 1.5 3 1.5H10L16 7.5V11" stroke={Blue} strokeWidth="1.7" />
                                <path d="M10 1.5V7.5H16" stroke={Blue} strokeWidth="1.7" />
                                <path d="M10 17V24.5C10 25 10.5 25.5 11 25.5H21.5C22 25.5 22.5 25 22.5 24.5V17" stroke={Blue} strokeWidth="1.7" />
                                <path d="M16 21V11M12.5 14L16 10.5L19.5 14" stroke={Blue} strokeWidth="1.7" />
                            </Ico>
                        </LargeIcon>
                        <LargeText>创建并共享</LargeText>
                        <LargeText $latin>Adobe PDF</LargeText>
                    </Large>
                </Group>

                <Collapse viewBox="0 0 11 8" fill="none" stroke="#666" strokeWidth="1.5">
                    <path d="M1 6.5L5.5 2L10 6.5" />
                </Collapse>
            </Ribbon>

            <Main>
                <Sidebar>
                    <ThumbNo>1</ThumbNo>
                    <Thumb />
                </Sidebar>
                <Canvas>
                    <Slide />
                </Canvas>
            </Main>

            <RedBox />
            <Arrow viewBox="750 165 65 105">
                <path d="M759 170L778 185L772 187L806 265L803 265L765 190L759 194Z" fill="#ee1c2b" />
            </Arrow>
            <Mark>
                <MarkBai>Bai</MarkBai>
                <MarkPaw viewBox="0 0 90 80" fill="#fff" stroke="#cfcfcf" strokeWidth="1">
                    <ellipse cx="17" cy="32" rx="8" ry="13" transform="rotate(-5 17 32)" />
                    <ellipse cx="35" cy="15" rx="7" ry="12" />
                    <ellipse cx="55" cy="17" rx="8" ry="12" />
                    <ellipse cx="67" cy="37" rx="8" ry="13" transform="rotate(-20 67 37)" />
                    <path d="M45 32C55 32 60 44 68 52C76 62 70 75 58 75H28C16 75 12 64 17 56C27 48 32 32 45 32Z" />
                </MarkPaw>
                <MarkDu>du</MarkDu>
                <MarkCn>经验</MarkCn>
                <MarkUrl>jingyan.baidu.com</MarkUrl>
            </Mark>
        </Page>
    );
}
